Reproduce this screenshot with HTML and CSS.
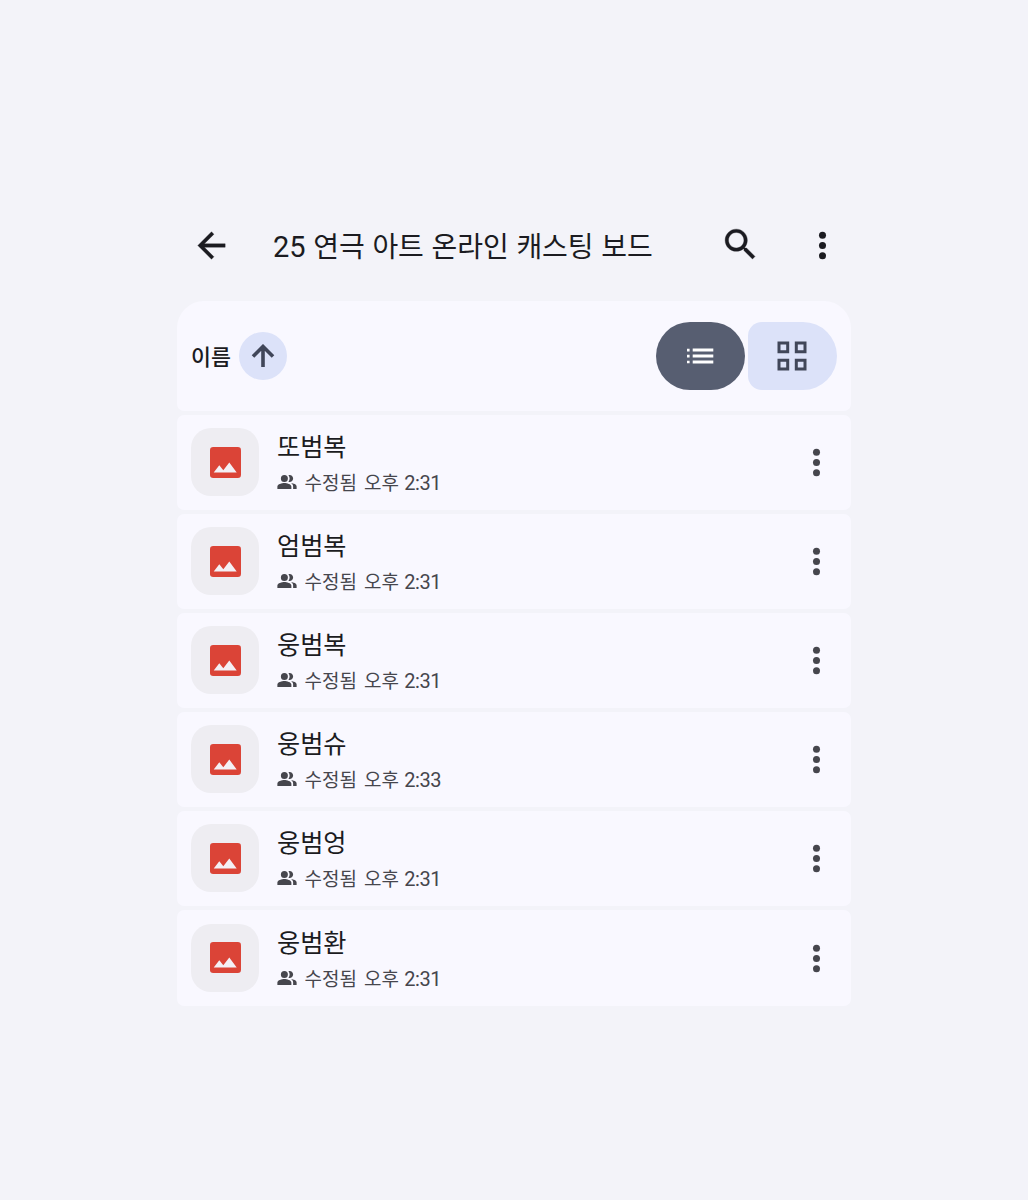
FILE: index.html
```
<!DOCTYPE html>
<html lang="ko">
<head>
    <meta charset="UTF-8">
    <title>25 연극 아트 온라인 캐스팅 보드</title>
    <link rel="stylesheet" href="styles.css">
</head>
<body>
    <!-- shared icons -->
    <svg class="defs" width="0" height="0">
        <symbol id="more" viewBox="0 0 24 24">
            <circle cx="12" cy="6" r="2.05"/><circle cx="12" cy="12" r="2.05"/><circle cx="12" cy="18" r="2.05"/>
        </symbol>
        <symbol id="image" viewBox="0 0 31 31">
            <rect width="31" height="31" rx="3.2" fill="#db4437"/>
            <path d="M3.7 25.6l5.6-7.3 4 4.9 6-7.7 7.4 10.1z" fill="#f4f0f5"/>
        </symbol>
        <symbol id="people" viewBox="1 4 22 16">
            <path d="M16.67 13.13C18.04 14.06 19 15.32 19 17v3h4v-3c0-2.18-3.57-3.47-6.33-3.87zM15 12c2.21 0 4-1.79 4-4s-1.79-4-4-4c-.47 0-.91.1-1.33.24C14.5 5.27 15 6.58 15 8s-.5 2.73-1.33 3.76c.42.14.86.24 1.33.24zM9 12a4 4 0 1 0 0-8 4 4 0 0 0 0 8zm0 1c-2.67 0-8 1.34-8 4v3h16v-3c0-2.66-5.33-4-8-4z"/>
        </symbol>
    </svg>

    <div class="app">
        <header class="topbar">
            <svg class="icon back" viewBox="0 0 24 24"><path d="M20 11H7.83l5.59-5.59L12 4l-8 8 8 8 1.41-1.41L7.83 13H20v-2z"/></svg>
            <h1><span class="num">25</span> 연극 아트 온라인 캐스팅 보드</h1>
            <svg class="icon search" viewBox="0 0 24 24"><path d="M15.5 14h-.79l-.28-.27C15.41 12.59 16 11.11 16 9.5 16 5.91 13.09 3 9.5 3S3 5.91 3 9.5 5.91 16 9.5 16c1.61 0 3.09-.59 4.23-1.57l.27.28v.79l5 4.99L20.49 19l-4.99-5zm-6 0C7.01 14 5 11.99 5 9.5S7.01 5 9.5 5 14 7.01 14 9.5 11.99 14 9.5 14z"/></svg>
            <svg class="icon"><use href="#more"/></svg>
        </header>

        <main class="list">
            <div class="controls">
                <span class="sort-label">이름</span>
                <span class="sort">
                    <svg width="24" height="24" viewBox="0 0 24 24"><path d="M12 23V3M2 12.5l10-10 10 10"/></svg>
                </span>
                <div class="toggle">
                    <span class="view view-list">
                        <svg width="28" height="16" viewBox="0 0 28 16"><path d="M1 .8h2.6v2.6H1zM6.7.6h20.6v3H6.7zM1 6.8h2.6v2.6H1zM6.7 6.6h20.6v3H6.7zM1 12.7h2.6v2.6H1zM6.7 12.5h20.6v3H6.7z"/></svg>
                    </span>
                    <span class="view view-grid">
                        <svg width="30" height="30" viewBox="0 0 30 30"><path d="M2 2h8.7v8.7H2zM19.3 2H28v8.7h-8.7zM2 19.3h8.7V28H2zM19.3 19.3H28V28h-8.7z"/></svg>
                    </span>
                </div>
            </div>

            <div class="row">
                <span class="thumb"><svg><use href="#image"/></svg></span>
                <div class="info">
                    <div class="name">또범복</div>
                    <div class="meta"><svg><use href="#people"/></svg><span>수정됨</span><span>오후 <span class="num">2:31</span></span></div>
                </div>
                <svg class="icon"><use href="#more"/></svg>
            </div>
            <div class="row">
                <span class="thumb"><svg><use href="#image"/></svg></span>
                <div class="info">
                    <div class="name">엄범복</div>
                    <div class="meta"><svg><use href="#people"/></svg><span>수정됨</span><span>오후 <span class="num">2:31</span></span></div>
                </div>
                <svg class="icon"><use href="#more"/></svg>
            </div>
            <div class="row">
                <span class="thumb"><svg><use href="#image"/></svg></span>
                <div class="info">
                    <div class="name">웅범복</div>
                    <div class="meta"><svg><use href="#people"/></svg><span>수정됨</span><span>오후 <span class="num">2:31</span></span></div>
                </div>
                <svg class="icon"><use href="#more"/></svg>
            </div>
            <div class="row">
                <span class="thumb"><svg><use href="#image"/></svg></span>
                <div class="info">
                    <div class="name">웅범슈</div>
                    <div class="meta"><svg><use href="#people"/></svg><span>수정됨</span><span>오후 <span class="num">2:33</span></span></div>
                </div>
                <svg class="icon"><use href="#more"/></svg>
            </div>
            <div class="row">
                <span class="thumb"><svg><use href="#image"/></svg></span>
                <div class="info">
                    <div class="name">웅범엉</div>
                    <div class="meta"><svg><use href="#people"/></svg><span>수정됨</span><span>오후 <span class="num">2:31</span></span></div>
                </div>
                <svg class="icon"><use href="#more"/></svg>
            </div>
            <div class="row">
                <span class="thumb"><svg><use href="#image"/></svg></span>
                <div class="info">
                    <div class="name">웅범환</div>
                    <div class="meta"><svg><use href="#people"/></svg><span>수정됨</span><span>오후 <span class="num">2:31</span></span></div>
                </div>
                <svg class="icon"><use href="#more"/></svg>
            </div>
        </main>
    </div>
</body>
</html>
```
FILE: styles.css
```
body {
    margin: 0;
    background: #f3f3f9;
    color: #1b1b21;
    font-family: "Noto Sans CJK KR", sans-serif;
}
.defs {
    display: none;
}
.app {
    width: 674px;
    margin-left: 177px;
    padding-top: 189px;
}
.icon {
    width: 41px;
    height: 41px;
    flex: none;
    fill: currentColor;
}
.num {
    font-family: Roboto, sans-serif;
    line-height: 1;
}
.topbar {
    display: flex;
    align-items: center;
    height: 112px;
    padding: 0 8px 0 14px;
}
.topbar .back,
.topbar .search {
    stroke: currentColor;
    stroke-width: 0.2;
}
.topbar h1 {
    flex: 1;
    margin: 0 0 0 41px;
    font-size: 28px;
    font-weight: 400;
    line-height: 40px;
    letter-spacing: -0.07px;
    white-space: nowrap;
}
.topbar h1 .num {
    font-size: 29px;
}
.topbar .search {
    margin: 0 41px 2px 0;
}
.list {
    display: flex;
    flex-direction: column;
    gap: 4px;
}
.controls {
    display: flex;
    align-items: center;
    height: 110px;
    padding: 0 14px;
    box-sizing: border-box;
    background: #f9f8ff;
    border-radius: 27px 27px 7px 7px;
}
.sort-label {
    width: 47.5px;
    font-size: 21.7px;
    font-weight: 500;
    line-height: 30px;
}
.sort {
    display: flex;
    align-items: center;
    justify-content: center;
    width: 48px;
    height: 48px;
    border-radius: 50%;
    background: #dce2f9;
}
.sort svg {
    fill: none;
    stroke: #404659;
    stroke-width: 3.6;
}
.toggle {
    display: flex;
    gap: 3px;
    margin-left: auto;
}
.view {
    display: flex;
    align-items: center;
    justify-content: center;
    width: 89px;
    height: 68px;
    padding-right: 1px;
    box-sizing: border-box;
}
.view-list {
    background: #575e71;
    border-radius: 34px;
    fill: #fff;
}
.view-grid {
    background: #dce2f9;
    border-radius: 14px 34px 34px 14px;
    fill: none;
    stroke: #404659;
    stroke-width: 3;
}
.row {
    display: flex;
    align-items: center;
    height: 95.1px;
    padding: 0 14px;
    box-sizing: border-box;
    background: #f9f8ff;
    border-radius: 7px;
}
.thumb {
    display: flex;
    align-items: center;
    justify-content: center;
    width: 68px;
    height: 68px;
    margin-bottom: 1px;
    border-radius: 20px;
    background: #eeedf2;
}
.thumb svg {
    width: 31px;
    height: 31px;
}
.info {
    flex: 1;
    margin-left: 18px;
    padding-top: 1px;
}
.name {
    font-size: 25.2px;
    line-height: 37px;
}
.meta {
    display: flex;
    align-items: center;
    font-size: 19px;
    line-height: 35px;
    color: #46464d;
}
.meta svg {
    width: 20px;
    height: 14px;
    margin: 1px 7.5px 0 0;
    fill: currentColor;
}
.meta > span + span {
    margin-left: 7px;
}
.meta .num {
    font-size: 20px;
    letter-spacing: -0.4px;
}
.row .icon {
    color: #46464d;
}
```
